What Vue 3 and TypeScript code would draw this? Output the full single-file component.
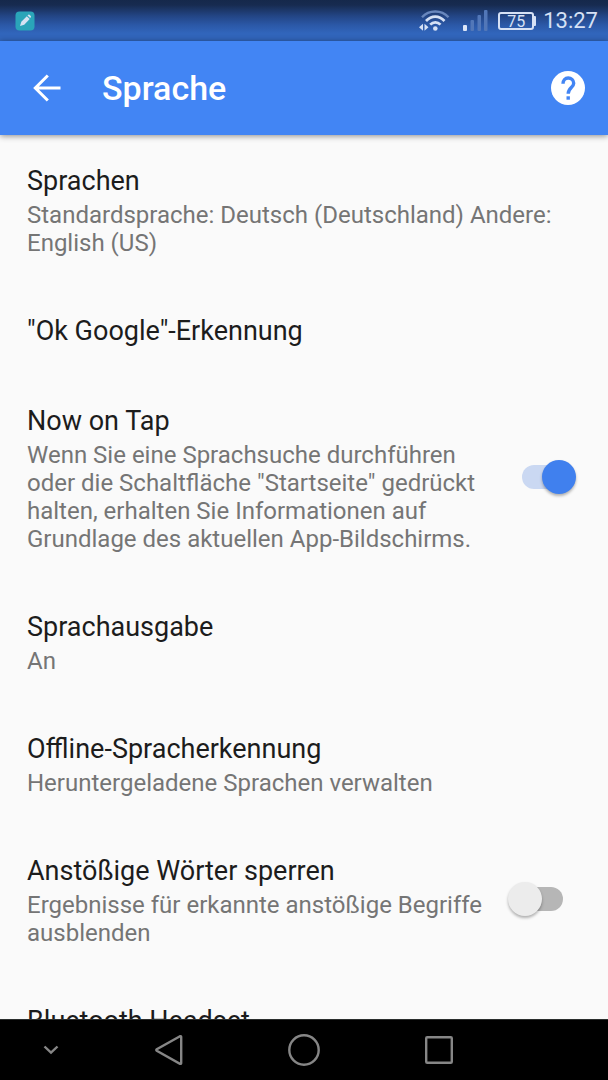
<script setup lang="ts">
import { reactive } from 'vue'

interface Setting {
  id: string
  title: string
  summary?: string
  enabled?: boolean
}

const settings = reactive<Setting[]>([
  { id: 'languages', title: 'Sprachen', summary: 'Standardsprache: Deutsch (Deutschland) Andere: English (US)' },
  { id: 'hotword', title: '"Ok Google"-Erkennung' },
  {
    id: 'now-on-tap',
    title: 'Now on Tap',
    summary:
      'Wenn Sie eine Sprachsuche durchführen oder die Schaltfläche "Startseite" gedrückt halten, erhalten Sie Informationen auf Grundlage des aktuellen App-Bildschirms.',
    enabled: true,
  },
  { id: 'speech-output', title: 'Sprachausgabe', summary: 'An' },
  { id: 'offline', title: 'Offline-Spracherkennung', summary: 'Heruntergeladene Sprachen verwalten' },
  {
    id: 'offensive',
    title: 'Anstößige Wörter sperren',
    summary: 'Ergebnisse für erkannte anstößige Begriffe ausblenden',
    enabled: false,
  },
  { id: 'bluetooth', title: 'Bluetooth Headset' },
])
</script>

<template>
  <div class="screen">
    <div class="status-bar">
      <svg class="app-badge" width="20" height="20" viewBox="0 0 20 20" aria-hidden="true">
        <rect x="0.5" y="0.5" width="19" height="19" rx="4" fill="#2aa5b9" />
        <path d="M5 15l1.3-4.2 5.5-5.6 2.9 2.9-5.5 5.6z" fill="#d5e2f2" />
        <path d="M12.5 4.5l.8-.7q.6-.5 1.2 0l1.3 1.3q.5.6 0 1.2l-.7.8z" fill="#d5e2f2" />
      </svg>
      <div class="status-right">
        <svg class="wifi" width="32" height="24" viewBox="0 0 32 24" fill="none" aria-hidden="true">
          <path d="M3 8.2C10 .6 22.5 .6 29.5 8.2" stroke="#6987bd" stroke-width="2.4" />
          <path d="M7 12C12.5 6.2 20 6.2 25.5 12" stroke="#d6e1f5" stroke-width="2.7" />
          <path d="M11.2 15.7C14.2 12.5 18.5 12.5 21.5 15.7" stroke="#d6e1f5" stroke-width="2.7" />
          <circle cx="16.3" cy="19.5" r="2.3" fill="#d6e1f5" />
          <path d="M0 18.3l4-3.5v7zM9.5 18.3l-4-3.5v7z" fill="#d6e1f5" />
        </svg>
        <svg class="signal" width="26" height="22" viewBox="0 0 26 22" aria-hidden="true">
          <rect x="0" y="15" width="4" height="6" rx="1" fill="#dce6f8" />
          <rect x="7.5" y="10" width="3.5" height="11" rx="1" fill="#5277b8" />
          <rect x="14.5" y="5" width="3.5" height="16" rx="1" fill="#5277b8" />
          <rect x="21" y="0" width="3.5" height="21" rx="1" fill="#5277b8" />
        </svg>
        <div class="battery"><span class="battery-level">75</span></div>
        <time class="clock">13:27</time>
      </div>
    </div>

    <header class="app-bar">
      <button class="icon-button" type="button" aria-label="Zurück">
        <svg width="28" height="28" viewBox="0 0 28 28" fill="none" stroke="#fff" stroke-width="3">
          <path d="M27.5 14H3M14.8 1.5L2.3 14l12.5 12.5" />
        </svg>
      </button>
      <h1>Sprache</h1>
      <button class="icon-button" type="button" aria-label="Hilfe">
        <svg width="34" height="34" viewBox="0 0 34 34" fill="none">
          <circle cx="17" cy="17" r="17" fill="#fff" />
          <path
            d="M12 12.8C12 9.3 14.2 7 17.2 7S22.700 9.100 22.700 12.200C22.700 16.500 17.200 16.700 17.200 22.800"
            stroke="#4285f4"
            stroke-width="3.4"
          />
          <rect x="15.500" y="25.300" width="3.400" height="3.400" fill="#4285f4" />
        </svg>
      </button>
    </header>

    <main class="settings">
      <component
        :is="setting.enabled === undefined ? 'button' : 'label'"
        v-for="setting in settings"
        :key="setting.id"
        class="setting"
      >
        <span class="setting-text">
          <span class="title">{{ setting.title }}</span>
          <span v-if="setting.summary" class="summary">{{ setting.summary }}</span>
        </span>
        <input
          v-if="setting.enabled !== undefined"
          v-model="setting.enabled"
          class="switch"
          type="checkbox"
          role="switch"
        />
      </component>
    </main>

    <nav class="nav-bar" aria-label="Systemnavigation">
      <button type="button" aria-label="Leiste ausblenden">
        <svg width="16" height="10" viewBox="0 0 16 10"><path d="M1.5 1.5L8 7.7l6.5-6.2" /></svg>
      </button>
      <button type="button" aria-label="Zurück">
        <svg width="28" height="32" viewBox="0 0 28 32">
          <path d="M25 2.2L1.8 15.2q-1 .8 0 1.600L25 29.8q1.2.3 1.2-.9V3.100q0-1.2-1.2-.9z" />
        </svg>
      </button>
      <button type="button" aria-label="Startseite">
        <svg width="32" height="32" viewBox="0 0 32 32"><circle cx="16" cy="16" r="14.7" /></svg>
      </button>
      <button type="button" aria-label="Letzte Apps">
        <svg width="28" height="28" viewBox="0 0 28 28">
          <rect x="1.2" y="1.2" width="25.6" height="25.6" rx="1" />
        </svg>
      </button>
    </nav>
  </div>
</template>

<style>
body {
  margin: 0;
  background: #fafafa;
}
</style>

<style scoped>
.screen {
  display: flex;
  flex-direction: column;
  height: 100vh;
  overflow: hidden;
  background: #fafafa;
  color: #1c1c1c;
  font-family: Roboto, "Liberation Sans", sans-serif;
}

button {
  margin: 0;
  padding: 0;
  border: 0;
  background: none;
  color: inherit;
  font: inherit;
  text-align: left;
}

svg {
  display: block;
}

.status-bar {
  display: flex;
  flex: none;
  align-items: center;
  justify-content: space-between;
  box-sizing: border-box;
  height: 41px;
  padding: 0 10px 0 15px;
  background: linear-gradient(#15284b 0, #172b50 5px, #234585 16px, #2b58a7 25px, #3165bb 33px, #3165bb 100%);
}

.status-right {
  display: flex;
  align-items: center;
  color: #d6e1f5;
}

.signal {
  margin: 0 9px 0 12px;
}

.battery {
  position: relative;
  box-sizing: border-box;
  width: 36px;
  height: 18px;
  margin-right: 9px;
  border: 2px solid #d6e1f5;
  border-radius: 3px;
}

.battery::after {
  content: "";
  position: absolute;
  top: 2px;
  right: -4px;
  width: 2px;
  height: 10px;
  border-radius: 0 1px 1px 0;
  background: #d6e1f5;
}

.battery-level {
  display: block;
  font-size: 16px;
  line-height: 15px;
  text-align: center;
}

.clock {
  font-size: 22px;
  line-height: 28px;
}

.app-bar {
  position: relative;
  display: flex;
  flex: none;
  align-items: center;
  box-sizing: border-box;
  height: 94px;
  padding: 0 23px 0 33px;
  background: #4285f4;
  box-shadow: 0 1px 6px rgba(0, 0, 0, 0.45);
  color: #fff;
}

.app-bar h1 {
  flex: 1;
  margin: 0 0 0 41px;
  font-size: 34px;
  font-weight: 500;
  line-height: 40px;
}

.settings {
  flex: 1;
  min-height: 0;
  overflow: hidden;
}

.setting {
  display: flex;
  align-items: center;
  justify-content: space-between;
  box-sizing: border-box;
  width: 100%;
  padding: 30px 32px 28px 27px;
}

.setting-text {
  display: flex;
  flex: 1;
  flex-direction: column;
  gap: 4px;
}

.title {
  font-size: 27px;
  line-height: 32px;
}

.summary {
  color: #757575;
  font-size: 24px;
  line-height: 28px;
}

.switch {
  position: relative;
  display: flex;
  flex: none;
  align-items: center;
  appearance: none;
  width: 68px;
  height: 34px;
  margin: 0 0 4px 16px;
}

.switch::before {
  content: "";
  width: 41px;
  height: 24px;
  margin: 0 auto;
  border-radius: 12px;
  background: #b6b6b6;
}

.switch::after {
  content: "";
  position: absolute;
  top: 0;
  left: 0;
  width: 34px;
  height: 34px;
  border-radius: 50%;
  background: #ececec;
  box-shadow: 0 2px 3px rgba(0, 0, 0, 0.3);
}

.switch:checked::before {
  background: #cad8f2;
}

.switch:checked::after {
  right: 0;
  left: auto;
  background: #4080ee;
}

.nav-bar {
  display: grid;
  flex: none;
  grid-template-columns: 3fr 4fr 4fr 4fr 3fr;
  box-sizing: border-box;
  height: 61px;
  border-top: 1px solid #2b2e2d;
  background: #000;
}

.nav-bar button {
  display: grid;
  place-items: center;
}

.nav-bar svg {
  fill: none;
  stroke: #868686;
  stroke-width: 2.4;
}
</style>
